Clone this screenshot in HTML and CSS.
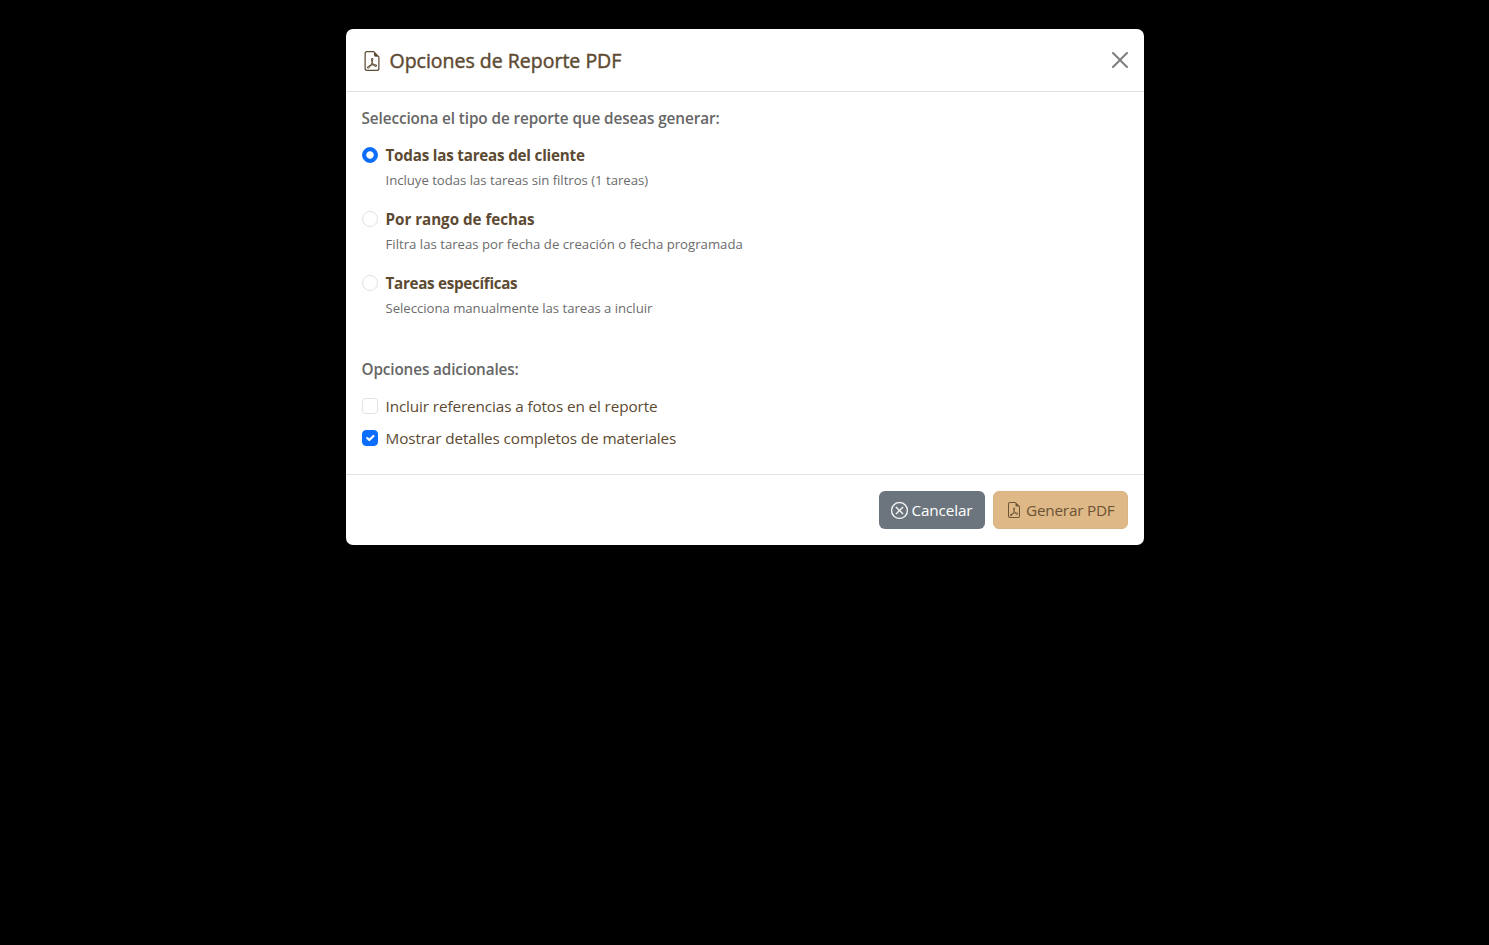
FILE: index.html
```html
<!DOCTYPE html>
<html lang="es">
<head>
<meta charset="utf-8">
<title>Opciones de Reporte PDF</title>
<link rel="stylesheet" href="styles.css">
</head>
<body>
<svg class="sprite" aria-hidden="true">
  <symbol id="pdf" viewBox="0 0 16 16"><path d="M14 14V4.5L9.5 0H4a2 2 0 0 0-2 2v12a2 2 0 0 0 2 2h8a2 2 0 0 0 2-2zM9.5 3A1.5 1.5 0 0 0 11 4.5h2V14a1 1 0 0 1-1 1H4a1 1 0 0 1-1-1V2a1 1 0 0 1 1-1h5.5z"/><path d="M4.603 14.087a.8.8 0 0 1-.438-.42c-.195-.388-.13-.776.08-1.102.198-.307.526-.568.897-.787a7.7 7.7 0 0 1 1.482-.645 20 20 0 0 0 1.062-2.227 7.3 7.3 0 0 1-.43-1.295c-.086-.4-.119-.796-.046-1.136.075-.354.274-.672.65-.823.192-.077.4-.12.602-.077a.7.7 0 0 1 .477.365c.088.164.12.356.127.538.007.188-.012.396-.047.614-.084.51-.27 1.134-.52 1.794a11 11 0 0 0 .98 1.686 5.8 5.8 0 0 1 1.334.05c.364.066.734.195.96.465.12.144.193.32.2.518.007.192-.047.382-.138.563a1.04 1.04 0 0 1-.354.416.86.86 0 0 1-.51.138c-.331-.014-.654-.196-.933-.417a5.7 5.7 0 0 1-.911-.95 11.7 11.7 0 0 0-1.997.406 11.3 11.3 0 0 1-1.02 1.51c-.292.35-.609.656-.927.787a.8.8 0 0 1-.58.029m1.379-1.901q-.25.115-.459.238c-.328.194-.541.383-.647.547-.094.145-.096.25-.04.361q.016.032.026.044l.035-.012c.137-.056.355-.235.635-.572a8 8 0 0 0 .45-.606m1.64-1.33a13 13 0 0 1 1.01-.193 12 12 0 0 1-.51-.858 21 21 0 0 1-.5 1.05zm2.446.45q.226.245.435.41c.24.19.407.253.498.256a.1.1 0 0 0 .07-.015.3.3 0 0 0 .094-.125.44.44 0 0 0 .059-.2.1.1 0 0 0-.026-.063c-.052-.062-.2-.152-.518-.209a4 4 0 0 0-.612-.053zM8.078 7.8a7 7 0 0 0 .2-.828q.046-.282.038-.465a.6.6 0 0 0-.032-.198.5.5 0 0 0-.145.04c-.087.035-.158.106-.196.283-.04.192-.03.469.046.822q.036.167.09.346z"/></symbol>
</svg>
<div class="modal">
  <header class="modal-header">
    <svg class="title-icon"><use href="#pdf"/></svg>
    <h5 class="title"><span>Opciones de Reporte PDF</span></h5>
    <svg class="close" viewBox="0 0 16 16"><path d="M.293.293a1 1 0 0 1 1.414 0L8 6.586 14.293.293a1 1 0 1 1 1.414 1.414L9.414 8l6.293 6.293a1 1 0 0 1-1.414 1.414L8 9.414l-6.293 6.293a1 1 0 0 1-1.414-1.414L6.586 8 .293 1.707a1 1 0 0 1 0-1.414"/></svg>
  </header>
  <main class="modal-body">
    <h6 class="heading"><span class="w-type">Selecciona el tipo de reporte que deseas generar:</span></h6>
    <div class="option">
      <i class="mark radio checked"></i>
      <div><div class="name"><span class="w-all">Todas las tareas del cliente</span></div><div class="hint"><span class="w-all-hint">Incluye todas las tareas sin filtros (1 tareas)</span></div></div>
    </div>
    <div class="option">
      <i class="mark radio"></i>
      <div><div class="name"><span class="w-range">Por rango de fechas</span></div><div class="hint"><span class="w-range-hint">Filtra las tareas por fecha de creación o fecha programada</span></div></div>
    </div>
    <div class="option">
      <i class="mark radio"></i>
      <div><div class="name"><span class="w-some">Tareas específicas</span></div><div class="hint"><span class="w-some-hint">Selecciona manualmente las tareas a incluir</span></div></div>
    </div>
    <h6 class="heading extra"><span class="w-extra">Opciones adicionales:</span></h6>
    <div class="check"><i class="mark"></i><span class="w-photos">Incluir referencias a fotos en el reporte</span></div>
    <div class="check"><i class="mark checked"><svg viewBox="0 0 20 20"><path d="m6 10 3 3 6-6"/></svg></i><span class="w-materials">Mostrar detalles completos de materiales</span></div>
  </main>
  <footer class="modal-footer">
    <div class="btn cancel"><svg viewBox="0 0 16 16"><path d="M8 15A7 7 0 1 1 8 1a7 7 0 0 1 0 14m0 1A8 8 0 1 0 8 0a8 8 0 0 0 0 16"/><path d="M4.646 4.646a.5.5 0 0 1 .708 0L8 7.293l2.646-2.647a.5.5 0 0 1 .708.708L8.707 8l2.647 2.646a.5.5 0 0 1-.708.708L8 8.707l-2.646 2.647a.5.5 0 0 1-.708-.708L7.293 8 4.646 5.354a.5.5 0 0 1 0-.708"/></svg><span>Cancelar</span></div>
    <div class="btn generate"><svg><use href="#pdf"/></svg><span>Generar PDF</span></div>
  </footer>
</div>
</body>
</html>
```
FILE: styles.css
```css
* { box-sizing: border-box; }
body {
  margin: 0;
  padding-top: 29px;
  min-height: 100vh;
  background: #000;
  color: #5c4a32;
  font: 15.3px/24px "Open Sans", "Noto Sans", sans-serif;
}
h5, h6 { margin: 0; }
span { white-space: nowrap; }
.sprite { display: none; }
svg { fill: currentColor; flex: none; }
.modal {
  width: 798px;
  height: 516px;
  margin: 0 0 0 346px;
  background: #fff;
  border-radius: 7px;
  overflow: hidden;
}
.modal-header {
  display: flex;
  align-items: center;
  height: 63px;
  padding: 0 16px 0 15.5px;
  border-bottom: 1px solid #dee2e6;
}
.title-icon { width: 20px; height: 20px; margin-top: 1px; }
.title {
  margin: 2px auto 0 8px;
  font-size: 19.5px;
  line-height: 30px;
  font-weight: 400;
  letter-spacing: 0;
  -webkit-text-stroke: .45px currentColor;
}
.close { width: 16px; height: 16px; color: #000; opacity: .5; }
.modal-body { height: 382px; padding: 16px 15px; }
.heading { height: 19px; padding-left: .5px; font-size: 15.3px; line-height: 20px; font-weight: 600; color: #666; }
.option, .check { display: flex; gap: 7.5px; }
.option { height: 48px; margin-top: 16px; }
.name { font-size: 15.2px; line-height: 25px; font-weight: 700; }
.hint { font-size: 13.2px; line-height: 24px; color: #6c6c6c; }
.mark {
  display: block;
  flex: none;
  width: 16px;
  height: 16px;
  margin: 4px 0 0 1px;
  border: 1px solid #dee2e6;
  border-radius: 4px;
}
.radio { border-radius: 50%; }
.mark.checked { background: #0d6efd; border-color: #0d6efd; }
.radio.checked { background: radial-gradient(circle, #fff 3.3px, #0d6efd 4.1px); }
.mark svg { display: block; width: 14px; height: 14px; fill: none; stroke: #fff; stroke-width: 3; stroke-linecap: round; stroke-linejoin: round; }
.extra { margin: 40px 0 16px; }
.check { height: 24px; margin-bottom: 8px; line-height: 25px; }
.modal-footer {
  display: flex;
  justify-content: flex-end;
  gap: 8px;
  height: 71px;
  padding: 16px;
  border-top: 1px solid #dee2e6;
}
.btn { display: flex; align-items: center; height: 38px; border-radius: 6px; padding: 0 12px; }
.cancel { width: 106px; background: #6c757d; color: #fff; gap: 3.5px; letter-spacing: -.15px; }
.cancel svg { width: 17px; height: 17px; stroke: currentColor; stroke-width: .25; }
.generate { width: 135px; background: #deb887; color: #6b5335; gap: 4px; border: 1px solid #d9b382; letter-spacing: -.21px; }
.generate svg { width: 16px; height: 16px; }

/* Per-label tracking */
.w-type { letter-spacing: -.1px; }
.w-extra { letter-spacing: -.13px; }
.w-all { letter-spacing: -.2px; }
.w-range { letter-spacing: -.03px; }
.w-some { letter-spacing: -.29px; }
.w-all-hint { letter-spacing: -.03px; }
.w-range-hint { letter-spacing: 0; }
.w-some-hint { letter-spacing: -.04px; }
.w-photos { letter-spacing: -.12px; }
.w-materials { letter-spacing: -.12px; }
```
